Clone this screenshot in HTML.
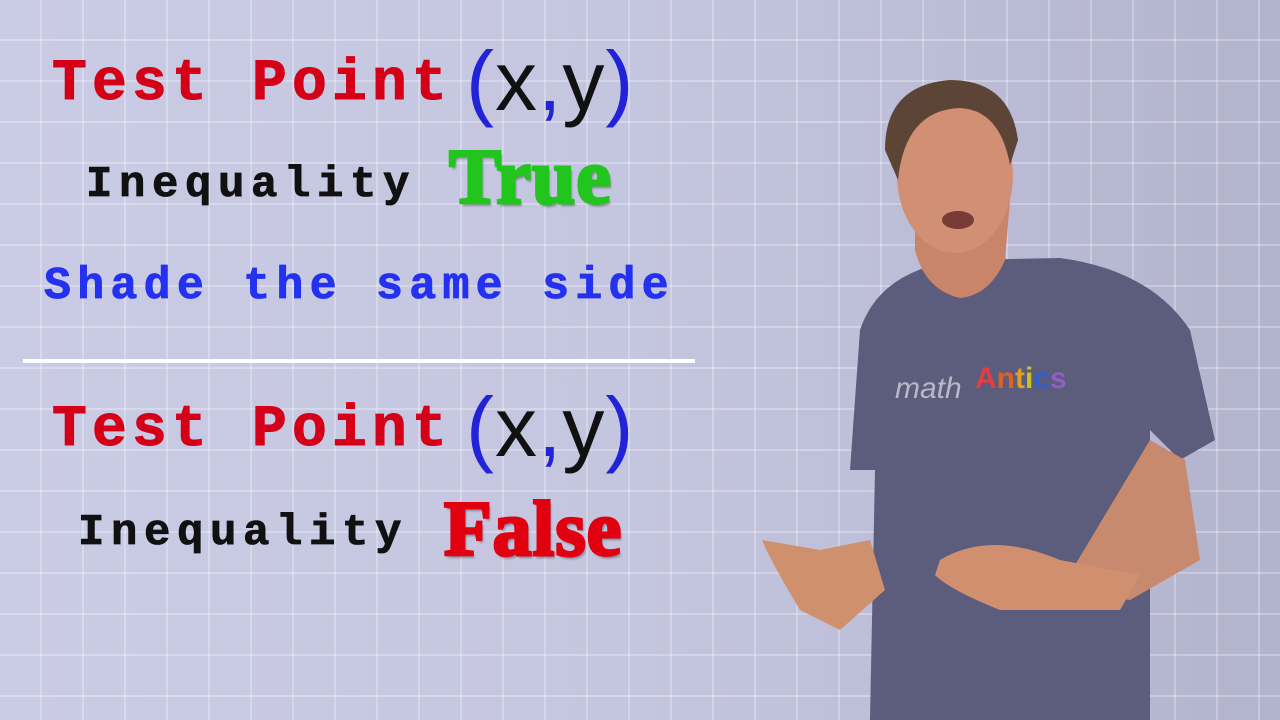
<!DOCTYPE html>
<html><head><style>
body{margin:0;width:1280px;height:720px;overflow:hidden;position:relative;font-family:"Liberation Mono",monospace;
background:
repeating-linear-gradient(90deg,transparent 0 40px,rgba(255,255,255,.28) 40px 42px),
repeating-linear-gradient(180deg,transparent 0 39px,rgba(255,255,255,.28) 39px 41px),
linear-gradient(90deg,#cacbe4 0%,#c4c5df 50%,#b2b3cd 100%);}
.t{position:absolute;white-space:nowrap;font-weight:bold}
.red{color:#d40018;font-size:58px;letter-spacing:5.2px;-webkit-text-stroke:1px #d40018}
.blk{color:#111;font-size:44px;letter-spacing:6.6px;-webkit-text-stroke:.8px #111}
.blue{color:#2431f0;font-size:45px;letter-spacing:6.2px;-webkit-text-stroke:.8px #2431f0}
.xy{font-family:"Liberation Sans",sans-serif;font-weight:normal;font-size:84px;color:#111;letter-spacing:1px}
.xy b{color:#2222d8;font-weight:normal}
.big{font-family:"Liberation Serif",serif;font-size:78px;letter-spacing:1px;text-shadow:2px 3px 2px rgba(0,0,0,.35)}
</style></head><body>
<div class="t red" style="left:52px;top:52px">Test Point</div>
<div class="t xy" style="left:466px;top:33px"><b>(</b>x<b>,</b>y<b>)</b></div>
<div class="t blk" style="left:86px;top:160px">Inequality</div>
<div class="t big" style="left:449px;top:132px;color:#22c41e;-webkit-text-stroke:3px #22c41e">True</div>
<div class="t blue" style="left:44px;top:261px">Shade the same side</div>
<div style="position:absolute;left:23px;top:359px;width:672px;height:4px;background:#fff"></div>
<div class="t red" style="left:52px;top:398px">Test Point</div>
<div class="t xy" style="left:466px;top:379px"><b>(</b>x<b>,</b>y<b>)</b></div>
<div class="t blk" style="left:78px;top:508px">Inequality</div>
<div class="t big" style="left:444px;top:484px;color:#e00010;-webkit-text-stroke:3px #e00010">False</div>
<svg style="position:absolute;left:0;top:0" width="1280" height="720">
<path d="M860 330 Q880 270 960 260 L1060 258 Q1150 270 1190 330 L1215 440 L1180 460 L1150 430 L1150 720 L870 720 L875 470 L850 470 Z" fill="#5c5c7c"/>
<path d="M1150 440 L1185 460 L1200 560 L1130 600 L1060 590 Z" fill="#c88a6e"/>
<path d="M940 560 Q990 530 1060 560 L1140 575 L1120 610 L1000 610 Q950 590 935 575 Z" fill="#d09070"/>
<path d="M762 540 L820 550 L870 540 L885 590 L840 630 L800 610 Q770 560 762 540 Z" fill="#cf906e"/>
<path d="M915 200 L1010 200 L1005 260 Q990 295 960 298 Q925 290 915 250 Z" fill="#c9856a"/>
<ellipse cx="955" cy="175" rx="58" ry="78" fill="#d18f73"/>
<path d="M885 150 Q885 85 950 80 Q1010 80 1018 140 L1010 165 Q1000 110 960 108 Q905 110 898 180 Z" fill="#5c4536"/>
<ellipse cx="958" cy="220" rx="16" ry="9" fill="#7a3a36"/>
<text x="895" y="398" font-family="Liberation Sans" font-size="30" font-style="italic" fill="#b8b8c8">math</text>
<text x="975" y="388" font-family="Liberation Sans" font-size="30" font-weight="bold" fill="#e04040">A<tspan fill="#e06020">n</tspan><tspan fill="#e0a020">t</tspan><tspan fill="#d0c020">i</tspan><tspan fill="#3060d0">c</tspan><tspan fill="#9060c0">s</tspan></text>
</svg>
</body></html>
